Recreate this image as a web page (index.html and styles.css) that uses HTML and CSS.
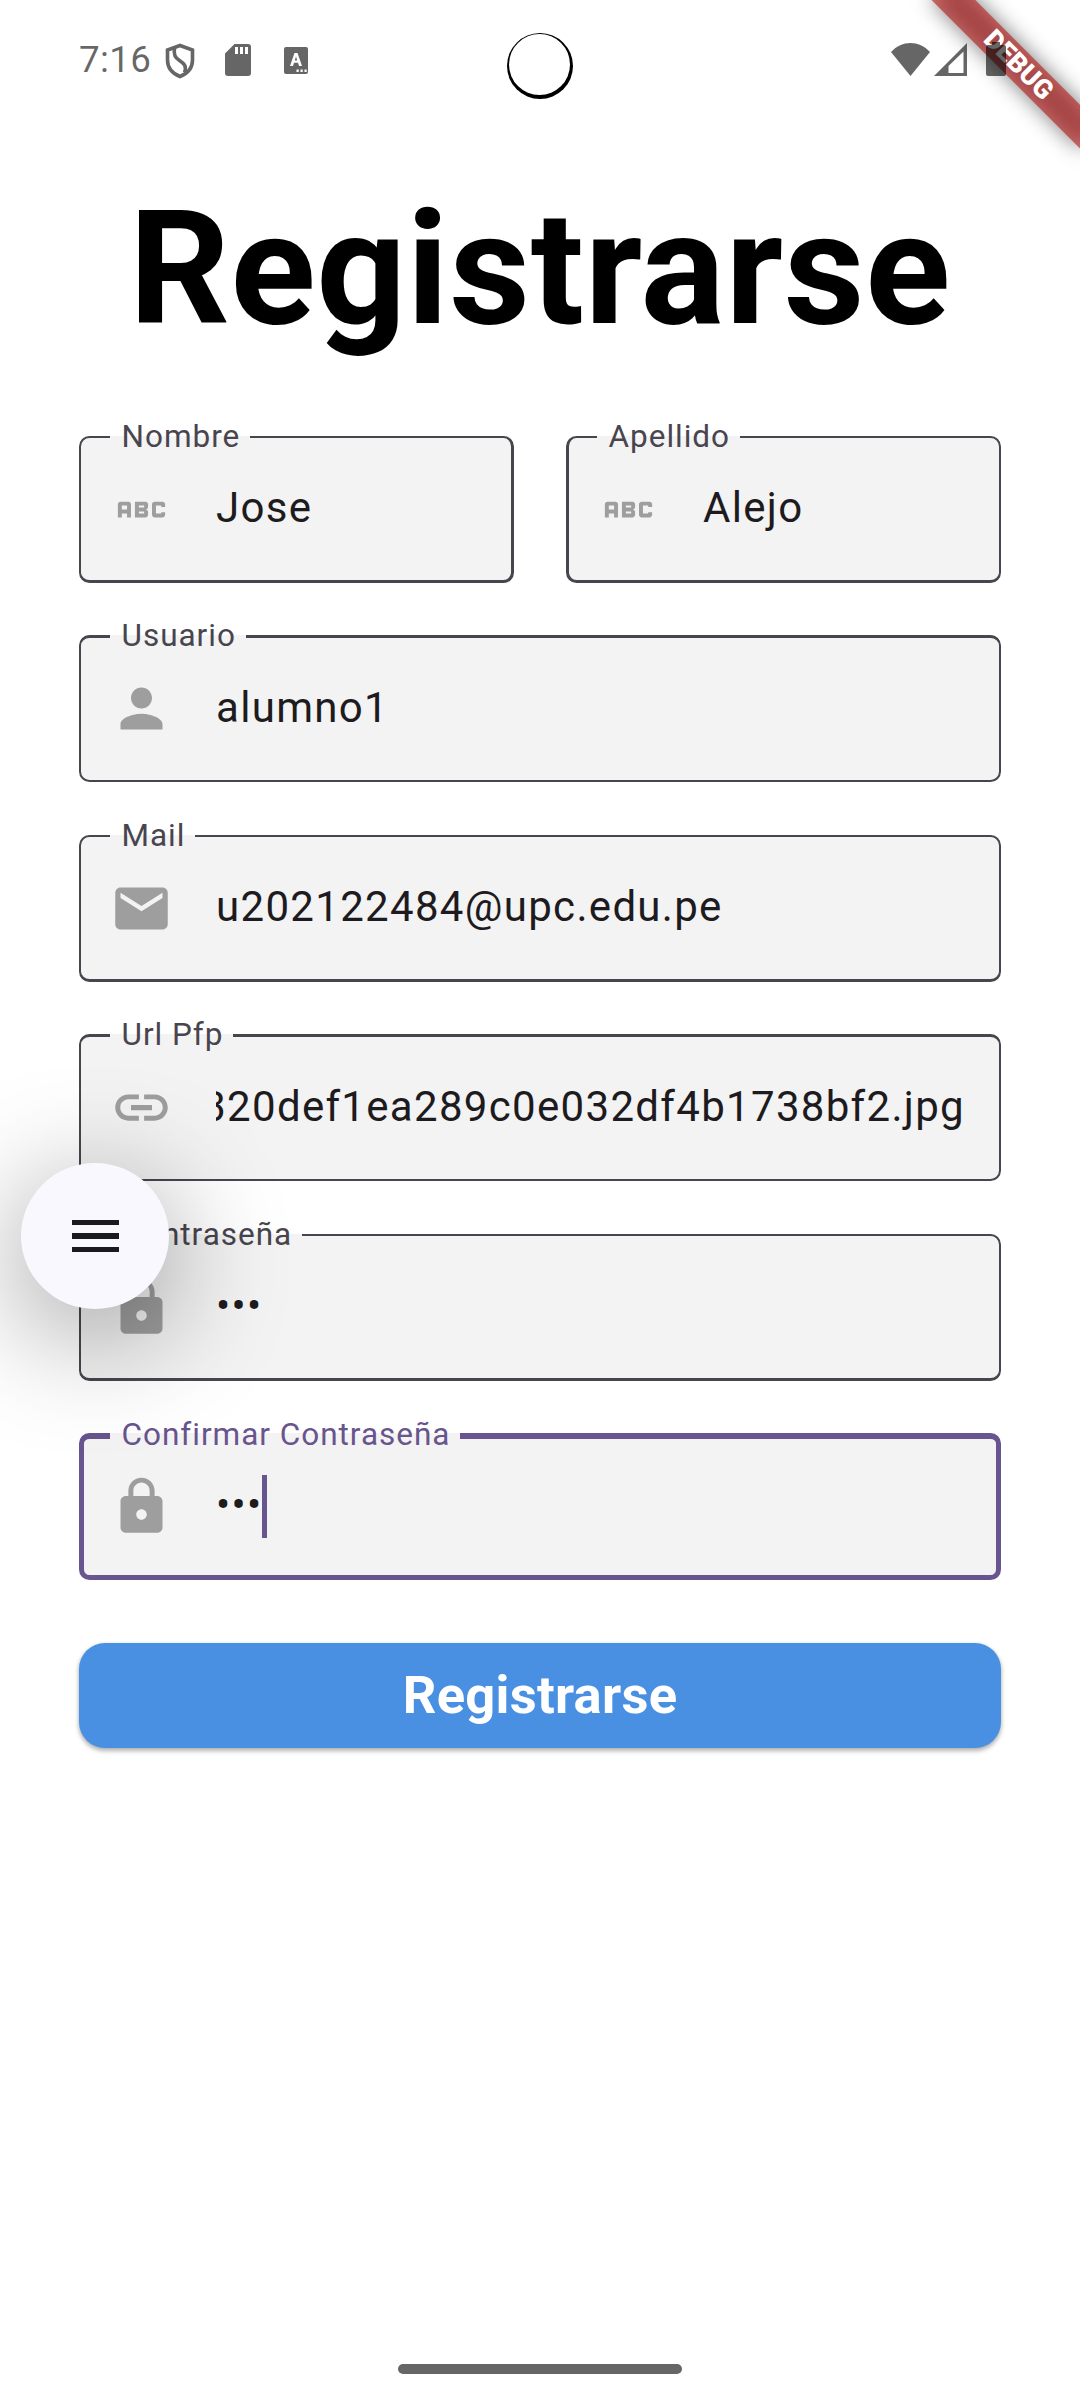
FILE: index.html
```html
<!DOCTYPE html>
<html lang="es">
<head>
<meta charset="utf-8">
<title>Registrarse</title>
<link rel="stylesheet" href="styles.css">
</head>
<body>
<svg class="sprite" aria-hidden="true">
  <symbol id="abc" viewBox="0 0 24 24"><path d="M21 11h-1.5v-.5h-2v3h2V13H21v1c0 .55-.45 1-1 1h-3c-.55 0-1-.45-1-1v-4c0-.55.45-1 1-1h3c.55 0 1 .45 1 1v1zM8 10v5H6.500v-1.500h-2V15H3v-5c0-.55.45-1 1-1h3c.55 0 1 .45 1 1zm-1.500.500h-2V12h2v-1.500zm7 1.500c.55 0 1 .45 1 1v1c0 .55-.45 1-1 1h-4V9h4c.55 0 1 .45 1 1v1c0 .55-.45 1-1 1zM11 10.500v.750h2v-.750h-2zm2 2.250h-2v.750h2v-.750z"/></symbol>
  <symbol id="person" viewBox="0 0 24 24"><path d="M12 12c2.210 0 4-1.790 4-4s-1.790-4-4-4-4 1.790-4 4 1.790 4 4 4zm0 2c-2.670 0-8 1.340-8 4v2h16v-2c0-2.660-5.330-4-8-4z"/></symbol>
  <symbol id="mail" viewBox="0 0 24 24"><path d="M20 4H4c-1.100 0-1.990.900-1.990 2L2 18c0 1.100.900 2 2 2h16c1.100 0 2-.900 2-2V6c0-1.100-.900-2-2-2zm0 4l-8 5-8-5V6l8 5 8-5v2z"/></symbol>
  <symbol id="link" viewBox="0 0 24 24"><path d="M3.900 12c0-1.710 1.390-3.100 3.100-3.100h4V7H7c-2.760 0-5 2.240-5 5s2.240 5 5 5h4v-1.900H7c-1.710 0-3.100-1.390-3.100-3.100zM8 13h8v-2H8v2zm9-6h-4v1.900h4c1.710 0 3.100 1.390 3.100 3.100s-1.390 3.100-3.100 3.100h-4V17h4c2.760 0 5-2.240 5-5s-2.240-5-5-5z"/></symbol>
  <symbol id="lock" viewBox="0 0 24 24"><path d="M18 8h-1V6c0-2.760-2.240-5-5-5S7 3.240 7 6v2H6c-1.100 0-2 .900-2 2v10c0 1.100.900 2 2 2h12c1.100 0 2-.900 2-2V10c0-1.100-.900-2-2-2zm-6 9c-1.100 0-2-.900-2-2s.900-2 2-2 2 .900 2 2-.900 2-2 2zm3.100-9H8.900V6c0-1.710 1.390-3.100 3.100-3.100s3.100 1.390 3.100 3.100v2z"/></symbol>
</svg>

<header class="status">
  <span class="time">7:16</span>
  <svg class="shield" viewBox="0 0 30 36"><path d="M15 2.500L27.500 7v10c0 8-5 13.500-12.500 16.500C7.500 30.500 2.500 25 2.500 17V7z"/><path d="M9.500 4.500C8.500 12 10 14.500 14.500 17.500S22 23 19.500 29.500"/></svg>
  <svg class="sdcard" viewBox="0 0 26 32"><path fill-rule="evenodd" d="M9.500 0H23a3 3 0 0 1 3 3v26a3 3 0 0 1-3 3H3a3 3 0 0 1-3-3V9.500zM10 3v7h3V3zm5 0v7h3V3zm5 0v7h3V3z"/></svg>
  <svg class="keyboard" viewBox="0 0 24 27"><path fill-rule="evenodd" d="M2 0h20a2 2 0 0 1 2 2v23a2 2 0 0 1-2 2H2a2 2 0 0 1-2-2V2a2 2 0 0 1 2-2zM10.500 6L6 19h3l1-3.200h4l1 3.200h3L13.500 6zM12 9.500l1.200 4h-2.400zM12.500 22.500v2.500h2.200v-2.500zm4 0v2.500h2.200v-2.500zm4 0v2.500h2.200v-2.500z"/></svg>
  <svg class="wifi" viewBox="0 0 39 33"><path d="M0 9C11-3 28-3 39 9L19.500 33z"/></svg>
  <svg class="signal" viewBox="0 0 33 33"><path fill-rule="evenodd" d="M33 0v33H0zM29.500 8.500L14.500 23v7h15z"/></svg>
  <svg class="battery" viewBox="0 0 20 34"><path d="M6 0h8v3h4a2 2 0 0 1 2 2v27a2 2 0 0 1-2 2H2a2 2 0 0 1-2-2V5a2 2 0 0 1 2-2h4z"/></svg>
  <span class="camera"></span>
</header>

<div class="debug"><span class="debug-shadow"></span><span class="debug-band">DEBUG</span></div>

<main class="form">
  <h1>Registrarse</h1>
  <div class="pair">
    <div class="field low right">
      <label>Nombre</label>
      <svg class="icon"><use href="#abc"/></svg>
      <span class="value">Jose</span>
    </div>
    <div class="field low left">
      <label>Apellido</label>
      <svg class="icon"><use href="#abc"/></svg>
      <span class="value">Alejo</span>
    </div>
  </div>
  <div class="field high">
    <label>Usuario</label>
    <svg class="icon"><use href="#person"/></svg>
    <span class="value">alumno1</span>
  </div>
  <div class="field low">
    <label>Mail</label>
    <svg class="icon"><use href="#mail"/></svg>
    <span class="value">u202122484@upc.edu.pe</span>
  </div>
  <div class="field high">
    <label>Url Pfp</label>
    <svg class="icon"><use href="#link"/></svg>
    <span class="value scrolled">320def1ea289c0e032df4b1738bf2.jpg</span>
  </div>
  <div class="field low">
    <label>Contraseña</label>
    <svg class="icon"><use href="#lock"/></svg>
    <span class="value">•••</span>
  </div>
  <div class="field focused">
    <label>Confirmar Contraseña</label>
    <svg class="icon"><use href="#lock"/></svg>
    <span class="value">•••</span><span class="caret"></span>
  </div>
  <button class="submit" type="button">Registrarse</button>
</main>

<button class="fab" type="button" aria-label="Menu"><span></span><span></span><span></span></button>
<div class="home"></div>
</body>
</html>
```
FILE: styles.css
```css
* { box-sizing: border-box; }

body {
  position: relative;
  width: 1080px;
  height: 2400px;
  margin: 0;
  overflow: hidden;
  background: #fff;
  font-family: Roboto, sans-serif;
  display: flex;
  flex-direction: column;
}

.sprite { position: absolute; width: 0; height: 0; }

/* Status bar */
.status {
  position: relative;
  z-index: 3;
  height: 118px;
  padding: 0 75px 0 79px;
  display: flex;
  align-items: center;
  color: rgba(0, 0, 0, .6);
}
.status svg { fill: currentColor; flex: none; }
.time {
  width: 86px;
  font-size: 36.75px;
  line-height: 43px;
  letter-spacing: .35px;
  white-space: nowrap;
}
.status .shield { width: 30px; height: 36px; margin-top: 3px; fill: none; stroke: #666; stroke-width: 3.6; }
.sdcard { width: 26px; height: 32px; margin: 2px 0 0 30px; }
.keyboard { width: 24px; height: 27px; margin: 2px 0 0 33px; }
.wifi { width: 39px; height: 33px; margin: 0 4px 0 auto; }
.signal { width: 33px; height: 33px; margin-right: 19px; }
.battery { width: 20px; height: 34px; }
.status .battery { margin-right: -1px; }
.camera {
  position: absolute;
  left: 507px;
  top: 33px;
  width: 66px;
  height: 66px;
  border-radius: 50%;
  background: #000;
}
.camera::after {
  content: "";
  position: absolute;
  left: 2px;
  top: 1px;
  width: 61px;
  height: 61px;
  border-radius: 50%;
  background: #fff;
}

/* Corner banner */
.debug {
  position: absolute;
  z-index: 2;
  left: 1080px;
  top: 0;
  width: 0;
  height: 0;
  transform: rotate(45deg);
}
.debug span {
  position: absolute;
  left: -105px;
  top: 73.5px;
  width: 210px;
  height: 31.5px;
}
.debug-shadow { background: rgba(0, 0, 0, .5); filter: blur(10.4px); }
.debug-band {
  padding-left: 5px;
  background: rgba(183, 28, 28, .627);
  color: #fff;
  font-size: 26.8px;
  font-weight: 900;
  line-height: 31.5px;
  text-align: center;
}

/* Form */
.form {
  padding: 59px 79px 0;
  display: flex;
  flex-direction: column;
}
h1 {
  margin: 0 0 74px;
  font-size: 157.5px;
  line-height: 185px;
  font-weight: 700;
  letter-spacing: .656px;
  text-align: center;
  white-space: nowrap;
  color: #000;
}
.pair { display: grid; grid-template-columns: 435px 435px; column-gap: 52px; }
.field {
  position: relative;
  height: 147px;
  margin-bottom: 52.4px;
  padding-left: 31px;
  display: flex;
  align-items: center;
  background: #f3f3f3;
  border-radius: 10.5px;
}
.field::before {
  content: "";
  position: absolute;
  inset: 0;
  border: 2px solid #49454f;
  border-radius: 10.5px;
}
.low::before { border-bottom-width: 3px; }
.high::before { border-top-width: 3px; }
.right::before { border-right-width: 3px; }
.left::before { border-left-width: 3px; }
.focused::before { border: 5px solid #68548e; border-top-width: 6px; }
.field label {
  position: absolute;
  z-index: 0;
  left: 31px;
  top: -18px;
  padding: 0 10px 0 11.5px;
  font-size: 31.5px;
  line-height: 37px;
  letter-spacing: .984px;
  color: #49454f;
  white-space: nowrap;
}
.field label::before {
  content: "";
  position: absolute;
  z-index: -1;
  left: 0;
  right: 0;
  top: 18px;
  height: 7px;
  background: #f3f3f3;
}
.field.focused label { top: -17px; color: #68548e; }
.field.focused label::before { top: 17px; }
.icon { width: 63px; height: 63px; flex: none; fill: #9e9e9e; }
.value {
  margin-left: 43px;
  padding-bottom: 3px;
  font-size: 42px;
  line-height: 63px;
  letter-spacing: 1.3125px;
  color: #1d1b20;
  white-space: nowrap;
}
.pair .value { padding-bottom: 5px; }
.scrolled {
  width: 749px;
  display: flex;
  justify-content: flex-end;
  overflow: hidden;
}
.caret { width: 5px; height: 63px; background: #68548e; }

.submit {
  height: 105px;
  margin-top: 11px;
  padding: 0;
  border: 0;
  border-radius: 26px;
  background: #4a90e2;
  box-shadow: 0 3px 5px rgba(0, 0, 0, .26), 0 1px 4px rgba(0, 0, 0, .12);
  color: #fff;
  font: 700 52.5px/105px Roboto, sans-serif;
  letter-spacing: .2625px;
}

/* Floating menu button */
.fab {
  position: absolute;
  z-index: 4;
  left: 21px;
  top: 1163px;
  width: 148px;
  height: 146px;
  padding: 0;
  border: 0;
  border-radius: 50%;
  background: #f9f8ff;
  box-shadow: 0 24px 120px rgba(0, 0, 0, .42);
  display: flex;
  flex-direction: column;
  align-items: center;
  justify-content: center;
  gap: 7.9px;
}
.fab span { width: 47px; height: 5.250px; background: #1a1b21; }

.home {
  position: absolute;
  left: 398px;
  bottom: 26px;
  width: 284px;
  height: 10px;
  border-radius: 5px;
  background: #666;
}
```
